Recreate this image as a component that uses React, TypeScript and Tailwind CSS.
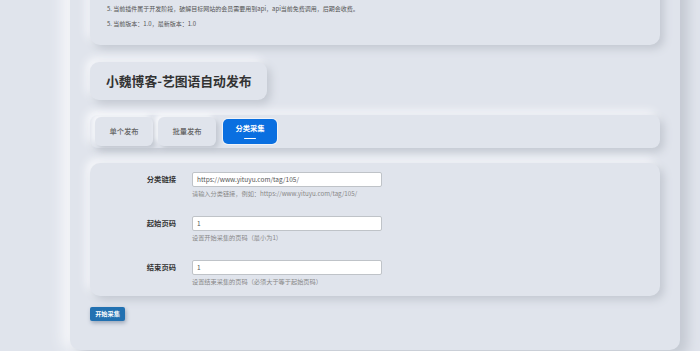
const neu = 'shadow-[4px_4px_8px_#c3c8d1,-4px_-4px_8px_#f7f8fb]'

const rows = [
  { label: '分类链接', value: 'https://www.yituyu.com/tag/105/', help: '请输入分类链接，例如：https://www.yituyu.com/tag/105/' },
  { label: '起始页码', value: '1', help: '设置开始采集的页码（最小为1）' },
  { label: '结束页码', value: '1', help: '设置结束采集的页码（必须大于等于起始页码）' },
]

export default function App() {
  return (
    <div
      className="h-[351px] w-[700px] overflow-hidden bg-[#e0e4ec]"
      style={{ fontFamily: '"Noto Sans CJK SC", "Noto Sans", sans-serif' }}
    >
      <div className="ml-[70px] mt-[-40px] w-[610px] rounded-b-[10px] bg-[#e0e4ec] px-[20px] pb-[29px] pt-[20px] shadow-[8px_6px_12px_#c4c9d2,-8px_0px_14px_#f6f7fa]">
        {/* notes card, top scrolled out of view */}
        <div className={`rounded-[10px] bg-[#e0e4ec] pb-[16px] pl-[17px] pt-[24px] ${neu}`}>
          <p className="mb-[5px] h-[10px] text-[6px] leading-[10px] text-[#555]">
            5. 当前插件属于开发阶段，破解目标网站的会员需要用到api，api当前免费调用，后期会收费。
          </p>
          <p className="h-[10px] text-[6px] leading-[10px] text-[#555]">
            5. 当前版本：1.0，最新版本：1.0
          </p>
        </div>

        <div className={`mt-[17px] inline-flex h-[38px] items-center rounded-[9px] bg-[#e0e4ec] pl-[16px] pr-[15px] ${neu}`}>
          <h1 className="text-[12.8px] font-bold text-[#333]">小魏博客-艺图语自动发布</h1>
        </div>

        {/* tabs */}
        <div className={`mt-[15px] flex h-[33px] items-center gap-[5px] rounded-[8px] bg-[#e0e4ec] px-[5px] ${neu}`}>
          <div className="flex h-[29px] w-[58px] items-center justify-center rounded-[6px] bg-[#e0e4ec] text-[7.3px] font-medium text-[#666] shadow-[3px_3px_5px_#c3c8d1,-3px_-3px_5px_#f7f8fb]">
            单个发布
          </div>
          <div className="flex h-[29px] w-[58px] items-center justify-center rounded-[6px] bg-[#e0e4ec] text-[7.3px] font-medium text-[#666] shadow-[3px_3px_5px_#c3c8d1,-3px_-3px_5px_#f7f8fb]">
            批量发布
          </div>
          <div className="ml-[2px] flex h-[25px] w-[54px] flex-col items-center justify-center rounded-[5px] bg-[#0a6fe0] shadow-[0_0_0_1px_#f0f3f8]">
            <span className="mt-[-1px] text-[7.3px] font-bold leading-[10px] text-white">分类采集</span>
            <span className="mt-[5px] h-[1.5px] w-[12px] rounded bg-white" />
          </div>
        </div>

        {/* form */}
        <div className={`mt-[15px] rounded-[10px] bg-[#e0e4ec] pb-[8px] pt-[9px] ${neu}`}>
          {rows.map((r) => (
            <div key={r.label} className="flex h-[44px] last:h-[28px]">
              <div className="w-[86px] pt-[2px] text-right text-[7.3px] font-semibold leading-[10px] text-[#333]">
                {r.label}
              </div>
              <div className="ml-[16px]">
                <div className="flex h-[15px] w-[190px] items-center rounded-[2px] border border-[#bfc3c8] bg-white pl-[4px] text-[6.5px] text-[#555]">
                  {r.value}
                </div>
                <p className="mt-[2px] text-[6.2px] leading-[9px] text-[#888]">{r.help}</p>
              </div>
            </div>
          ))}
        </div>

        <button className="mt-[11px] flex h-[14px] w-[35px] items-center justify-center rounded-[2px] bg-[#2271b1] text-[6.2px] font-bold text-white shadow-[1px_2px_4px_#9aa6b8]">
          开始采集
        </button>
      </div>
    </div>
  )
}
